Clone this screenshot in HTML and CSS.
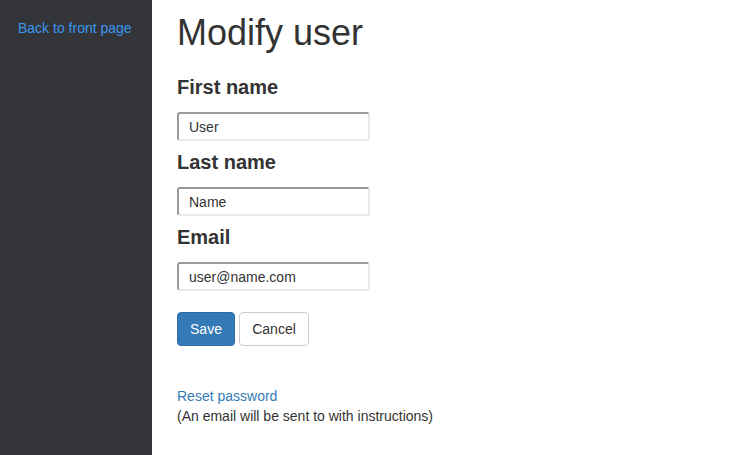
FILE: index.html
```html
<!DOCTYPE html>
<html>
<head>
<meta charset="utf-8">
<title>Modify user</title>
<link rel="stylesheet" href="styles.css">
</head>
<body>
<div class="layout">
  <nav class="sidebar">
    <a class="side-link" href="#">Back to front page</a>
  </nav>
  <main class="content">
    <h1 class="title">Modify user</h1>
    <form class="user-form">
      <div class="field">
        <label class="field-label" for="first">First name</label>
        <input class="field-input" id="first" type="text" value="User">
      </div>
      <div class="field">
        <label class="field-label" for="last">Last name</label>
        <input class="field-input" id="last" type="text" value="Name">
      </div>
      <div class="field">
        <label class="field-label" for="email">Email</label>
        <input class="field-input" id="email" type="text" value="user@name.com">
      </div>
      <div class="actions">
        <button class="btn btn-primary" type="button">Save</button>
        <button class="btn btn-default" type="button">Cancel</button>
      </div>
    </form>
    <div class="reset">
      <a class="reset-link" href="#">Reset password</a>
      <div class="reset-note">(An email will be sent to with instructions)</div>
    </div>
  </main>
</div>
</body>
</html>
```

FILE: styles.css
```css
html, body {
  margin: 0;
  padding: 0;
  height: 100%;
  background: #ffffff;
  font-family: "Liberation Sans", Arial, sans-serif;
  font-size: 14px;
  line-height: 20px;
  color: #333333;
}

.layout {
  display: flex;
  min-height: 100%;
}

.sidebar {
  width: 152px;
  flex: 0 0 152px;
  background: #333539;
  padding: 18px 0 0 18px;
  box-sizing: border-box;
}

.side-link {
  color: #3c96ef;
  text-decoration: none;
  font-size: 14px;
  line-height: 20px;
}

.content {
  flex: 1;
  padding: 13px 0 0 25px;
}

.title {
  margin: 0;
  font-size: 36px;
  line-height: 40px;
  font-weight: 500;
  color: #333333;
}

.user-form {
  margin-top: 23px;
}

.field {
  display: flex;
  flex-direction: column;
  align-items: flex-start;
  margin-bottom: 10px;
}

.field-label {
  font-size: 20px;
  line-height: 22px;
  font-weight: bold;
  color: #333333;
  margin-bottom: 14px;
}

.field-input {
  box-sizing: border-box;
  width: 193px;
  height: 29px;
  padding: 0 10px;
  border: 2px solid;
  border-color: #999999 #e8e8e8 #e8e8e8 #999999;
  border-radius: 3px;
  font-family: "Liberation Sans", Arial, sans-serif;
  font-size: 14px;
  color: #333333;
  background: #ffffff;
  outline: none;
}

.actions {
  display: flex;
  gap: 4px;
  margin-top: 21px;
}

.btn {
  box-sizing: border-box;
  height: 34px;
  padding: 6px 12px;
  font-family: "Liberation Sans", Arial, sans-serif;
  font-size: 14px;
  line-height: 20px;
  border: 1px solid transparent;
  border-radius: 4px;
  cursor: pointer;
}

.btn-primary {
  background: #337ab7;
  border-color: #2e6da4;
  color: #ffffff;
  width: 58px;
}

.btn-default {
  background: #ffffff;
  border-color: #cccccc;
  color: #333333;
  width: 70px;
}

.reset {
  margin-top: 40px;
}

.reset-link {
  color: #337ab7;
  text-decoration: none;
}

.reset-note {
  color: #333333;
}
```
